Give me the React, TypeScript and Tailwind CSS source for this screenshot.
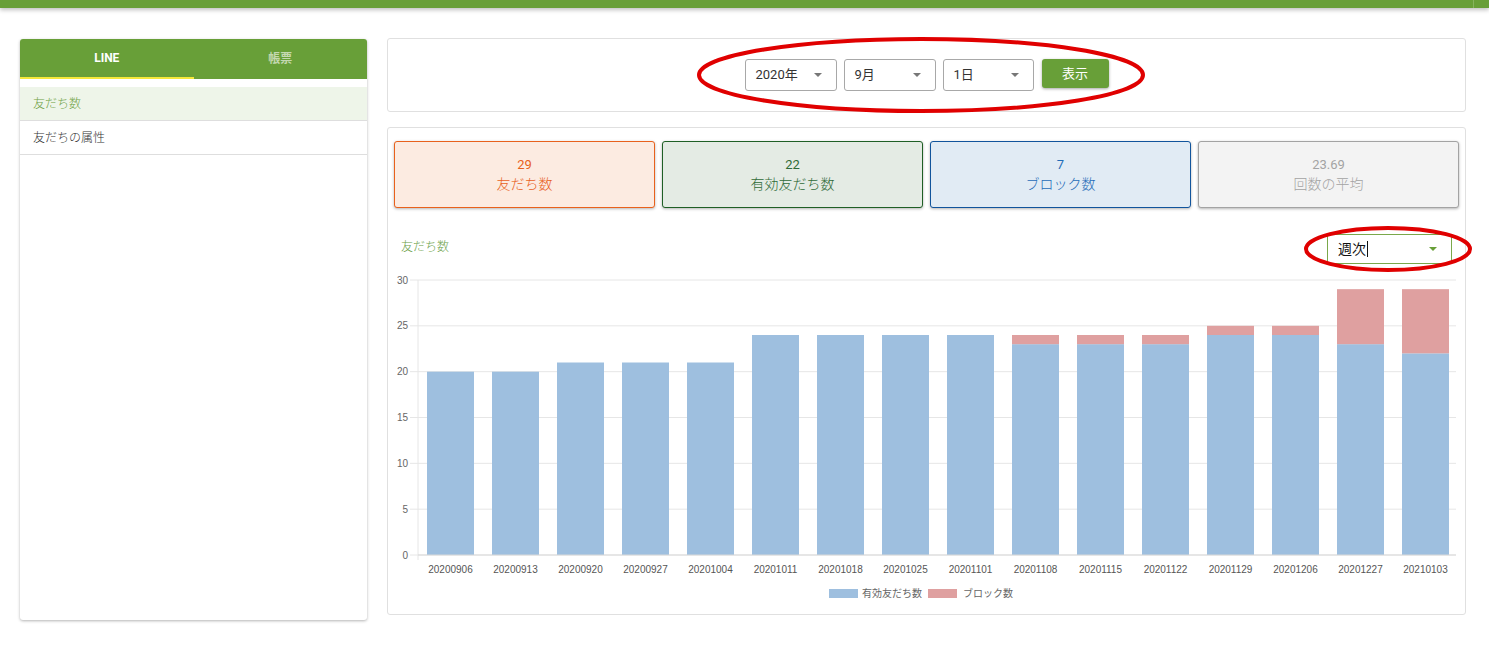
import React from "react";

const FONT = { fontFamily: 'Roboto, "Noto Sans CJK JP", sans-serif' };

const labels = [
  "20200906", "20200913", "20200920", "20200927", "20201004", "20201011",
  "20201018", "20201025", "20201101", "20201108", "20201115", "20201122",
  "20201129", "20201206", "20201227", "20210103",
];
const valid = [20, 20, 21, 21, 21, 24, 24, 24, 24, 23, 23, 23, 24, 24, 23, 22];
const blocked = [0, 0, 0, 0, 0, 0, 0, 0, 0, 1, 1, 1, 1, 1, 6, 7];

const stats = [
  { value: "29", label: "友だち数", box: "bg-[#fcebe1] border-[#e8611c] text-[#e8611c]" },
  { value: "22", label: "有効友だち数", box: "bg-[#e4ebe4] border-[#1f5f25] text-[#2f6a37]" },
  { value: "7", label: "ブロック数", box: "bg-[#e1ebf4] border-[#11549c] text-[#1f6cb8]" },
  { value: "23.69", label: "回数の平均", box: "bg-[#f3f3f3] border-[#a3a3a3] text-[#a3a3a3]" },
];

function Caret({ className }: { className?: string }) {
  return (
    <svg width="8" height="4" viewBox="0 0 8 4" className={className}>
      <path d="M0 0 L8 0 L4 4 Z" fill="currentColor" />
    </svg>
  );
}

function DateSelect({ label, width }: { label: string; width: string }) {
  return (
    <div className={`flex items-center justify-between h-8 border border-[#a8a8a8] rounded-[3px] pl-[10px] pr-[14px] ${width}`}>
      <span className="text-[13px] text-[#333]">{label}</span>
      <Caret className="text-[#777]" />
    </div>
  );
}

function Chart() {
  const top = 13;
  const base = 288;
  const unit = (base - top) / 30;
  const ticks = [0, 5, 10, 15, 20, 25, 30];
  return (
    <svg width="1077" height="340" viewBox="0 0 1077 340" style={{ fontFamily: '"Liberation Sans", "Noto Sans CJK JP", sans-serif' }}>
      {ticks.map((t) => {
        const y = base - t * unit;
        return (
          <g key={t}>
            <line x1={22} x2={1068} y1={y} y2={y} stroke="#e6e6e6" strokeWidth={1} />
            <text x={20} y={y + 3.5} fontSize="10" fill="#666" textAnchor="end">{t}</text>
          </g>
        );
      })}
      <line x1={30} x2={30} y1={top} y2={base + 5} stroke="#e6e6e6" strokeWidth={1} />
      {labels.map((l, i) => {
        const x = 39 + 65 * i;
        const vh = valid[i] * unit;
        const bh = blocked[i] * unit;
        return (
          <g key={l}>
            <rect x={x} y={base - vh} width={47} height={vh} fill="#9ebfdf" />
            {bh > 0 && <rect x={x} y={base - vh - bh} width={47} height={bh} fill="#dfa0a0" />}
            <text x={x + 23.5} y={306} fontSize="10" fill="#555" textAnchor="middle">{l}</text>
          </g>
        );
      })}
      <line x1={30} x2={1068} y1={base} y2={base} stroke="#d9d9d9" strokeWidth={1} />
      <rect x={441} y={322} width={29} height={9} fill="#9ebfdf" />
      <text x={474} y={330} fontSize="10" fill="#666">有効友だち数</text>
      <rect x={540} y={322} width={29} height={9} fill="#dfa0a0" />
      <text x={575} y={330} fontSize="10" fill="#666">ブロック数</text>
    </svg>
  );
}

export default function App() {
  return (
    <div className="relative w-[1489px] h-[655px] bg-white overflow-hidden" style={FONT}>
      {/* top bar */}
      <div className="relative h-2 bg-[#689f38] shadow-[0_2px_4px_rgba(0,0,0,0.25)]">
        <div className="absolute right-[15px] top-0 h-2 w-px bg-[#86b35e]" />
      </div>

      <div className="flex gap-5 pl-5 pr-[23px] pt-[30px]">
        {/* left panel */}
        <div className="w-[347px] h-[581px] mt-px bg-white rounded-[3px] shadow-[0_1px_3px_rgba(0,0,0,0.3)]">
          <div className="flex h-10 bg-[#689f38] rounded-t-[3px]">
            <div className="flex-1 flex items-center justify-center border-b-2 border-[#f5e83a] text-white text-[12px] font-bold">
              LINE
            </div>
            <div className="flex-1 flex items-center justify-center text-[#c4d8b0] text-[12px] font-bold">
              帳票
            </div>
          </div>
          <div className="pt-2">
            <div className="h-[34px] flex items-center pl-[13px] bg-[#eef5e9] text-[#6fa245] text-[12px] font-light border-b border-[#dedede]">
              友だち数
            </div>
            <div className="h-[34px] flex items-center pl-[13px] text-[#333] text-[12px] font-light border-b border-[#dedede]">
              友だちの属性
            </div>
          </div>
        </div>

        {/* right */}
        <div className="flex-1 flex flex-col gap-[15px]">
          <div className="h-[74px] border border-[#e0e0e0] rounded-[3px] flex items-start justify-center pt-5 gap-[7px]">
            <DateSelect label="2020年" width="w-[92px]" />
            <DateSelect label="9月" width="w-[92px]" />
            <DateSelect label="1日" width="w-[91px]" />
            <button className="ml-px h-[29px] w-[67px] bg-[#689f38] rounded-[3px] text-white text-[13px] shadow-[0_1px_3px_rgba(0,0,0,0.35)]">
              表示
            </button>
          </div>

          <div className="h-[488px] border border-[#e0e0e0] rounded-[3px] pt-[13px]">
            <div className="grid grid-cols-4 gap-[7px] px-[6px]">
              {stats.map((s) => (
                <div
                  key={s.label}
                  className={`h-[67px] border rounded-[3px] flex flex-col items-center justify-center shadow-[0_1px_3px_rgba(0,0,0,0.3)] ${s.box}`}
                >
                  <div className="text-[13px] leading-[18px]">{s.value}</div>
                  <div className="text-[14px] leading-[20px] font-light">{s.label}</div>
                </div>
              ))}
            </div>

            <div className="flex justify-between items-start mt-[26px] pl-[13px] pr-[13px] h-[33px]">
              <div className="pt-[4px] text-[12px] text-[#6aa046] font-light">友だち数</div>
              <div className="w-[125px] h-[30px] border border-[#7aa84a] flex items-center justify-between pl-[10px] pr-[14px]">
                <span className="text-[14px] text-[#111] flex items-center">
                  週次<span className="inline-block w-px h-[16px] bg-[#111] ml-px" />
                </span>
                <Caret className="text-[#689f38]" />
              </div>
            </div>

            <Chart />
          </div>
        </div>
      </div>

      {/* annotation ellipses */}
      <svg className="absolute left-0 top-0 pointer-events-none" width="1489" height="655">
        <ellipse cx={921} cy={75} rx={222} ry={36} fill="none" stroke="#e00000" strokeWidth={4} />
        <ellipse cx={1388} cy={249} rx={82} ry={21} fill="none" stroke="#e00000" strokeWidth={4} />
      </svg>
    </div>
  );
}
